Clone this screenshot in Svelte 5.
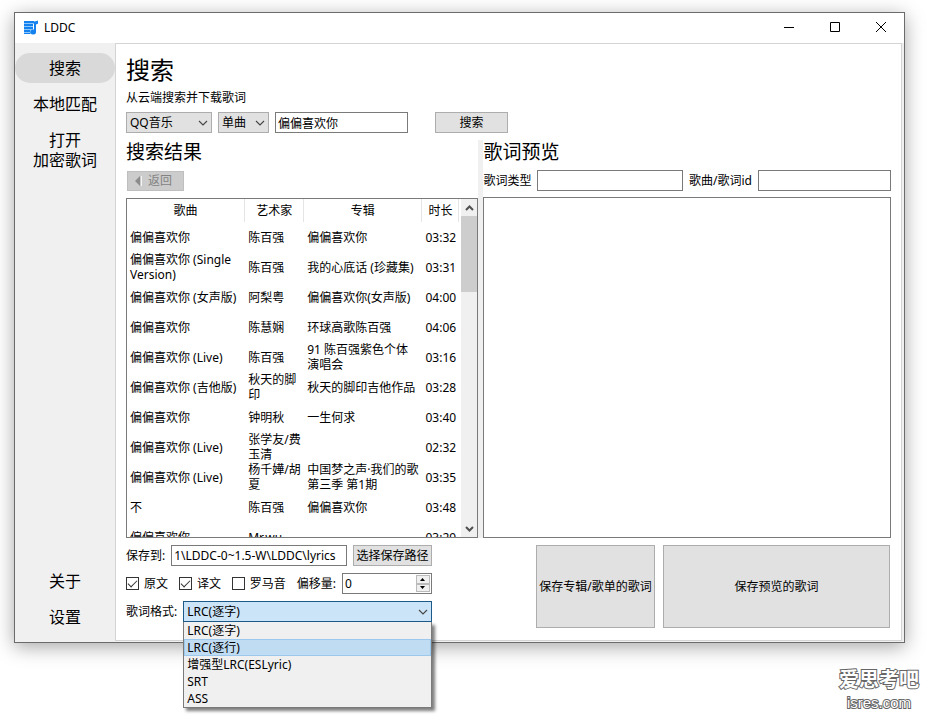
<script>
  let keyword = $state("偏偏喜欢你");
  let source = $state("QQ音乐");
  let searchType = $state("单曲");
  let savePath = $state("1\\LDDC-0~1.5-W\\LDDC\\lyrics");
  let offset = $state(0);
  let format = $state("LRC(逐字)");
  let hovered = $state("LRC(逐行)");
  let popupOpen = $state(true);

  const formats = ["LRC(逐字)", "LRC(逐行)", "增强型LRC(ESLyric)", "SRT", "ASS"];

  let languages = $state([
    { name: "原文", checked: true },
    { name: "译文", checked: true },
    { name: "罗马音", checked: false },
  ]);

  const songs = [
    { title: "偏偏喜欢你", artist: "陈百强", album: "偏偏喜欢你", time: "03:32" },
    { title: "偏偏喜欢你 (Single Version)", artist: "陈百强", album: "我的心底话 (珍藏集)", time: "03:31" },
    { title: "偏偏喜欢你 (女声版)", artist: "阿梨粤", album: "偏偏喜欢你(女声版)", time: "04:00" },
    { title: "偏偏喜欢你", artist: "陈慧娴", album: "环球高歌陈百强", time: "04:06" },
    { title: "偏偏喜欢你 (Live)", artist: "陈百强", album: "91 陈百强紫色个体演唱会", time: "03:16" },
    { title: "偏偏喜欢你 (吉他版)", artist: "秋天的脚印", album: "秋天的脚印吉他作品", time: "03:28" },
    { title: "偏偏喜欢你", artist: "钟明秋", album: "一生何求", time: "03:40" },
    { title: "偏偏喜欢你 (Live)", artist: "张学友/费玉清", album: "", time: "02:32" },
    { title: "偏偏喜欢你 (Live)", artist: "杨千嬅/胡夏", album: "中国梦之声·我们的歌 第三季 第1期", time: "03:35" },
    { title: "不", artist: "陈百强", album: "偏偏喜欢你", time: "03:48" },
    { title: "偏偏喜欢你", artist: "Mr.wu", album: "", time: "03:29" },
  ];

  function pick(item) {
    format = item;
    popupOpen = false;
  }
</script>

{#snippet chevron()}
  <svg class="chevron" width="10" height="6" viewBox="0 0 10 6" aria-hidden="true">
    <path d="M1 1l4 4 4-4" fill="none" stroke="#444" stroke-width="1.1" />
  </svg>
{/snippet}

<div class="desktop">
  <div class="window">
    <header class="titlebar">
      <svg width="16" height="16" viewBox="0 0 16 16" aria-hidden="true">
        <path d="M1 1h14v3H1zM1 4h9v10H1z" fill="#8cc6fa" />
        <g fill="#1482ee">
          <path d="M1 1h10v2H1zM1 4h9v2H1zM1 7h9v2H1zM1 10h6v2H1zM1 13h6v1H1z" />
          <path d="M11 2l4-1.500v3l-2 1v7.500a2.800 2.500 0 1 1-2-2.400z" />
        </g>
      </svg>
      <span class="app-name">LDDC</span>
      <div class="window-buttons">
        <button aria-label="最小化">
          <svg width="12" height="12" viewBox="0 0 12 12"><path d="M1 5.500h10" /></svg>
        </button>
        <button aria-label="最大化">
          <svg width="12" height="12" viewBox="0 0 12 12"><path d="M1.500 .5h9v9h-9z" /></svg>
        </button>
        <button aria-label="关闭">
          <svg width="12" height="12" viewBox="0 0 12 12"><path d="M1 0l10 10M11 0L1 10" /></svg>
        </button>
      </div>
    </header>

    <div class="body">
      <nav class="sidebar">
        <button class="nav-item active">搜索</button>
        <button class="nav-item">本地匹配</button>
        <button class="nav-item">打开<br />加密歌词</button>
        <span class="grow"></span>
        <button class="nav-item">关于</button>
        <button class="nav-item">设置</button>
      </nav>

      <main class="page">
        <h1>搜索</h1>
        <p class="description">从云端搜索并下载歌词</p>

        <form class="search-row" onsubmit={(e) => e.preventDefault()}>
          <div class="combo source">
            <select bind:value={source} aria-label="来源">
              <option>QQ音乐</option>
            </select>
            {@render chevron()}
          </div>
          <div class="combo type">
            <select bind:value={searchType} aria-label="类型">
              <option>单曲</option>
            </select>
            {@render chevron()}
          </div>
          <input class="field keyword" type="text" bind:value={keyword} aria-label="关键词" />
          <button class="btn search-btn">搜索</button>
        </form>

        <div class="panes">
          <section class="results">
            <h2>搜索结果</h2>
            <button class="btn back" disabled>
              <svg width="7" height="12" viewBox="0 0 7 12" aria-hidden="true">
                <path d="M5 1v10L0 6z" fill="#8c8c8c" />
                <path d="M6.500 1v10" stroke="#f4f4f4" />
              </svg>
              返回
            </button>
            <div class="table-box">
              <div class="viewport">
                <table>
                  <colgroup>
                    <col />
                    <col class="col-artist" />
                    <col />
                    <col class="col-time" />
                  </colgroup>
                  <thead>
                    <tr>
                      <th>歌曲</th>
                      <th>艺术家</th>
                      <th>专辑</th>
                      <th>时长</th>
                    </tr>
                  </thead>
                  <tbody>
                    {#each songs as song}
                      <tr>
                        <td>{song.title}</td>
                        <td>{song.artist}</td>
                        <td>{song.album}</td>
                        <td>{song.time}</td>
                      </tr>
                    {/each}
                  </tbody>
                </table>
              </div>
              <div class="scrollbar">
                <button aria-label="向上滚动">
                  <svg width="9" height="6" viewBox="0 0 9 6"><path d="M1 5l3.500-3.500L8 5" /></svg>
                </button>
                <div class="thumb"></div>
                <span class="grow"></span>
                <button aria-label="向下滚动">
                  <svg width="9" height="6" viewBox="0 0 9 6"><path d="M1 1l3.500 3.500L8 1" /></svg>
                </button>
              </div>
            </div>
          </section>

          <div class="splitter"></div>

          <section class="preview">
            <h2>歌词预览</h2>
            <div class="info-row">
              <label for="lyrics-type">歌词类型</label>
              <input id="lyrics-type" class="field grow" type="text" readonly />
              <label for="song-id">歌曲/歌词id</label>
              <input id="song-id" class="field song-id" type="text" readonly />
            </div>
            <textarea aria-label="歌词预览"></textarea>
          </section>
        </div>

        <div class="bottom">
          <div class="options">
            <div class="option-row">
              <label for="save-path">保存到:</label>
              <input id="save-path" class="field path" type="text" bind:value={savePath} />
              <button class="btn choose">选择保存路径</button>
            </div>
            <div class="option-row">
              {#each languages as lang}
                <label class="check">
                  <input type="checkbox" bind:checked={lang.checked} />
                  {lang.name}
                </label>
              {/each}
              <div class="offset">
                <label for="offset">偏移量:</label>
                <div class="spin">
                  <input id="offset" type="number" bind:value={offset} />
                  <div class="spin-buttons">
                    <button aria-label="增加" onclick={() => offset++}>
                      <svg width="5" height="3" viewBox="0 0 5 3"><path d="M0 3h5L2.500 0z" /></svg>
                    </button>
                    <button aria-label="减少" onclick={() => offset--}>
                      <svg width="5" height="3" viewBox="0 0 5 3"><path d="M0 0h5L2.500 3z" /></svg>
                    </button>
                  </div>
                </div>
              </div>
            </div>
            <div class="option-row">
              <label for="format">歌词格式:</label>
              <div class="combo format" class:open={popupOpen}>
                <select id="format" bind:value={format}>
                  {#each formats as item}
                    <option>{item}</option>
                  {/each}
                </select>
                {@render chevron()}
                {#if popupOpen}
                  <div class="popup" role="listbox" aria-label="歌词格式">
                    {#each formats as item}
                      <button
                        role="option"
                        aria-selected={item === hovered}
                        onmouseenter={() => (hovered = item)}
                        onclick={() => pick(item)}>{item}</button
                      >
                    {/each}
                  </div>
                {/if}
              </div>
            </div>
          </div>
          <span class="grow"></span>
          <button class="btn save-album">保存专辑/歌单的歌词</button>
          <button class="btn save-preview">保存预览的歌词</button>
        </div>
      </main>
    </div>
  </div>

  <footer class="watermark">
    <span class="mark-name">爱思考吧</span>
    <span class="mark-site">isres.com</span>
  </footer>
</div>

<style>
  :global(body) {
    background: #fff;
  }

  .desktop {
    box-sizing: border-box;
    display: flex;
    flex-direction: column;
    height: 100vh;
    min-height: 560px;
    padding: 12px 28px 12px 14px;
    font-family: "Noto Sans", "Noto Sans CJK SC", sans-serif;
    font-size: 12px;
    line-height: 16px;
    color: #000;
  }

  .desktop :is(button, input, select, textarea) {
    box-sizing: border-box;
    margin: 0;
    font: inherit;
    color: inherit;
    border-radius: 0;
  }

  button {
    padding: 0;
    border: none;
    background: none;
  }

  .grow {
    flex: 1;
    min-width: 0;
  }

  .window {
    flex: 1;
    min-height: 0;
    display: flex;
    flex-direction: column;
    border: 1px solid #6b6b6b;
    background: #f0f0f0;
    box-shadow: 0 4px 18px rgba(0, 0, 0, 0.35);
  }

  .titlebar {
    display: flex;
    align-items: center;
    height: 30px;
    padding-left: 8px;
    background: #fff;
  }

  .app-name {
    margin-left: 5px;
  }

  .window-buttons {
    display: flex;
    margin-left: auto;
  }

  .window-buttons button {
    display: grid;
    place-items: center;
    width: 46px;
    height: 30px;
  }

  .window-buttons path {
    fill: none;
    stroke: #000;
  }

  .body {
    flex: 1;
    min-height: 0;
    display: flex;
  }

  .sidebar {
    display: flex;
    flex-direction: column;
    gap: 6px;
    width: 100px;
    box-sizing: border-box;
    padding: 10px 0;
  }

  .nav-item {
    padding: 5px 0;
    border-radius: 15px !important;
    font-size: 16px !important;
    line-height: 20px !important;
  }

  .nav-item.active {
    background: #d9d9d9;
  }

  .page {
    flex: 1;
    min-width: 0;
    display: flex;
    flex-direction: column;
    margin: 0 2px 1px 0;
    padding: 10px 10px 12px;
    border: 1px solid #d4d4d4;
    background: #fff;
  }

  h1,
  h2,
  p {
    margin: 0;
    font-weight: 400;
  }

  h1 {
    font-size: 24px;
    line-height: 32px;
  }

  h2 {
    font-size: 19px;
    line-height: 24px;
  }

  .description {
    margin: 4px 0 6px;
  }

  .search-row {
    display: flex;
    gap: 6px;
    margin-bottom: 7px;
  }

  .field,
  .combo,
  .spin {
    height: 21px;
  }

  .field {
    padding: 0 2px;
    border: 1px solid #7a7a7a;
    background: #fff;
  }

  .keyword,
  .song-id {
    width: 133px;
  }

  .btn {
    border: 1px solid #adadad;
    background: #e1e1e1;
  }

  .search-btn {
    width: 73px;
    margin-left: 21px !important;
  }

  .combo {
    position: relative;
  }

  .combo.source {
    width: 86px;
  }

  .combo.type {
    width: 51px;
  }

  .combo select {
    display: block;
    width: 100%;
    height: 100%;
    padding: 0 3px;
    border: 1px solid #adadad;
    background: #e1e1e1;
    appearance: none;
  }

  .chevron {
    position: absolute;
    right: 4px;
    top: 8px;
    pointer-events: none;
  }

  .panes {
    flex: 1;
    min-height: 0;
    display: grid;
    grid-template-columns: 352fr 5px 407fr;
  }

  .results,
  .preview {
    min-width: 0;
    min-height: 0;
    display: flex;
    flex-direction: column;
  }

  .splitter {
    background: #f0f0f0;
  }

  .back {
    display: flex;
    align-items: center;
    justify-content: center;
    gap: 6px;
    width: 57px;
    height: 20px;
    margin: 7px 0 7px 1px !important;
    padding-right: 4px;
    border-color: #bfbfbf;
    background: #ccc;
    color: #838383 !important;
  }

  .table-box {
    flex: 1;
    min-height: 0;
    display: flex;
    border: 1px solid #7a7a7a;
  }

  .viewport {
    flex: 1;
    min-width: 0;
    overflow: hidden;
    padding-right: 2px;
  }

  table {
    width: 100%;
    table-layout: fixed;
    border-collapse: separate;
    border-spacing: 0;
    line-height: 15px;
  }

  .col-artist {
    width: 59px;
  }

  .col-time {
    width: 37px;
  }

  th {
    height: 23px;
    padding: 0;
    border-right: 1px solid #e5e5e5;
    font-weight: 400;
  }

  td {
    height: 30px;
    padding: 0 3px;
  }

  .scrollbar {
    display: flex;
    flex-direction: column;
    width: 16px;
    background: #f0f0f0;
  }

  .scrollbar button {
    display: grid;
    place-items: center;
    height: 17px;
  }

  .scrollbar path {
    fill: none;
    stroke: #505050;
    stroke-width: 2;
  }

  .thumb {
    height: 76px;
    background: #cdcdcd;
  }

  .info-row {
    display: flex;
    align-items: center;
    gap: 6px;
    margin: 6px 0;
  }

  textarea {
    flex: 1;
    min-height: 0;
    padding: 3px;
    border: 1px solid #7a7a7a;
    background: #fff;
    resize: none;
  }

  .bottom {
    display: flex;
    gap: 8px;
    margin-top: 7px;
    padding-right: 1px;
  }

  .options {
    display: flex;
    flex-direction: column;
    gap: 7px;
    width: 306px;
    height: 83px;
  }

  .option-row {
    display: flex;
    align-items: center;
    justify-content: space-between;
    gap: 6px;
  }

  .option-row label {
    white-space: nowrap;
  }

  .path {
    flex: 1;
    min-width: 0;
  }

  .choose {
    width: 79px;
    height: 21px;
  }

  .check {
    display: flex;
    align-items: center;
    gap: 5px;
  }

  .check input {
    display: grid;
    place-items: center;
    width: 13px;
    height: 13px;
    border: 1px solid #333;
    background: #fff;
    appearance: none;
  }

  .check input:checked::before {
    content: "";
    width: 9px;
    height: 5px;
    border: solid #333;
    border-width: 0 0 1px 1px;
    box-sizing: border-box;
    transform: translateY(-1px) rotate(-45deg);
  }

  .offset {
    display: flex;
    align-items: center;
    gap: 6px;
  }

  .spin {
    display: flex;
    box-sizing: border-box;
    width: 90px;
    padding: 1px;
    border: 1px solid #7a7a7a;
  }

  .spin input {
    flex: 1;
    min-width: 0;
    padding: 0 1px;
    border: none;
    background: none;
    appearance: textfield;
  }

  .spin-buttons {
    display: flex;
    flex-direction: column;
    width: 14px;
  }

  .spin-buttons button {
    flex: 1;
    display: grid;
    place-items: center;
    border: 1px solid #bbb;
    background: #f0f0f0;
  }

  .combo.format {
    flex: 1;
  }

  .combo.open select {
    border-color: #1c5a8a;
    background: #cce4f7;
  }

  .popup {
    position: absolute;
    z-index: 1;
    top: 100%;
    left: 0;
    right: 0;
    display: flex;
    flex-direction: column;
    border: 1px solid #7a7a7a;
    border-top: none;
    background: #f0f0f0;
    box-shadow: 3px 3px 3px rgba(0, 0, 0, 0.5);
  }

  .popup button {
    height: 17px;
    padding: 0 2px;
    border: 1px solid transparent;
    line-height: 15px;
    text-align: left;
  }

  .popup button[aria-selected="true"] {
    border-color: #9bc8ec;
    background: #c0dcf3;
  }

  .save-album {
    width: 119px;
  }

  .save-preview {
    width: 227px;
  }

  .watermark {
    display: flex;
    flex-direction: column;
    align-items: center;
    align-self: flex-end;
    margin: 24px -14px 0 0;
    color: #fff;
    paint-order: stroke fill;
    -webkit-text-stroke: 2px #666;
  }

  .mark-name {
    font-size: 20px;
    font-weight: 700;
    line-height: 26px;
  }

  .mark-site {
    font-family: "Liberation Sans Narrow", "Liberation Sans", sans-serif;
    font-size: 15px;
    line-height: 20px;
  }
</style>
